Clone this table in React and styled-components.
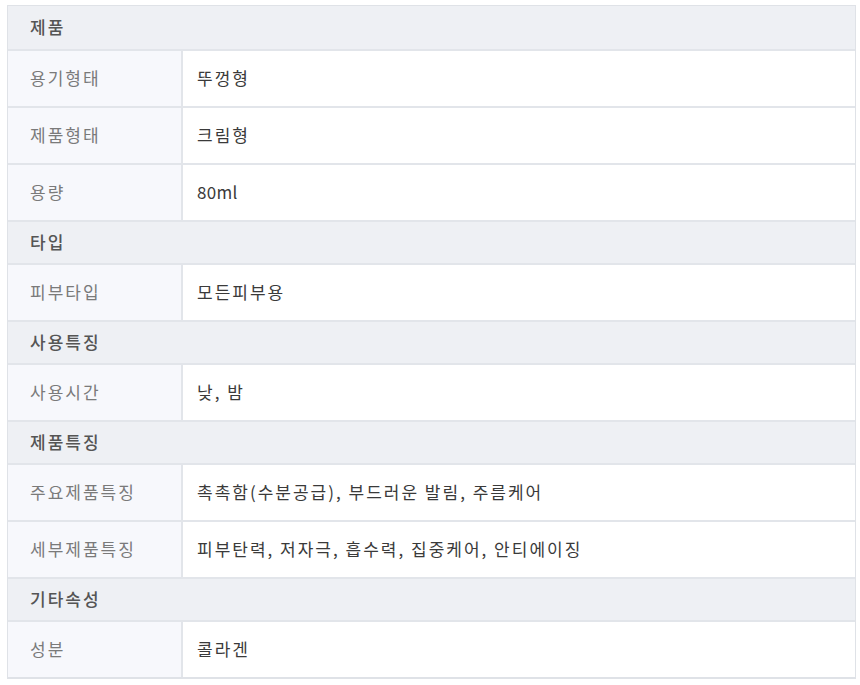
import React from 'react';
import styled, { createGlobalStyle } from 'styled-components';

const GlobalStyle = createGlobalStyle`
  body {
    margin: 0;
    background: #ffffff;
    font-family: "Noto Sans CJK KR", "Noto Sans", sans-serif;
  }
`;

const Page = styled.div`
  padding: 5px 4px 6px 7px;
`;

const Table = styled.div`
  border: 1px solid #dfe2e7;
  border-bottom-width: 2px;
  display: flex;
  flex-direction: column;
`;

const Section = styled.div`
  height: 43px;
  display: flex;
  align-items: center;
  padding: 0 0 2px 22px;
  background: #eef0f4;
  color: #555;
  font-size: 17px;
  letter-spacing: 2px;
  font-weight: 500;
  border-top: ${p => (p.$first ? 'none' : '2px solid #e2e5ea')};
  box-sizing: border-box;
`;

const Row = styled.div`
  display: grid;
  grid-template-columns: 175px 1fr;
  height: 57px;
  border-top: 2px solid #e2e5ea;
  box-sizing: border-box;
`;

const Cell = styled.div`
  display: flex;
  align-items: center;
  padding-bottom: 3px;
  font-size: 17px;
  letter-spacing: 2px;
`;

const Label = styled(Cell)`
  padding-left: 22px;
  background: #f7f8fc;
  color: #7a7a7a;
  border-right: 2px solid #e2e5ea;
`;

const Value = styled(Cell)`
  padding-left: 14px;
  background: #fff;
  color: #3a3a3a;
  letter-spacing: ${p => (p.$latin ? '0.3px' : '2px')};
`;

const data = [
  ['제품', [['용기형태', '뚜껑형'], ['제품형태', '크림형'], ['용량', '80ml']]],
  ['타입', [['피부타입', '모든피부용']]],
  ['사용특징', [['사용시간', '낮, 밤']]],
  ['제품특징', [
    ['주요제품특징', '촉촉함(수분공급), 부드러운 발림, 주름케어'],
    ['세부제품특징', '피부탄력, 저자극, 흡수력, 집중케어, 안티에이징'],
  ]],
  ['기타속성', [['성분', '콜라겐']]],
];

export default function App() {
  return (
    <Page>
      <GlobalStyle />
      <Table>
        {data.map(([title, rows], i) => (
          <React.Fragment key={title}>
            <Section $first={i === 0}>{title}</Section>
            {rows.map(([k, v]) => (
              <Row key={k}>
                <Label>{k}</Label>
                <Value $latin={/^[\x00-\x7f]+$/.test(v)}>{v}</Value>
              </Row>
            ))}
          </React.Fragment>
        ))}
      </Table>
    </Page>
  );
}
